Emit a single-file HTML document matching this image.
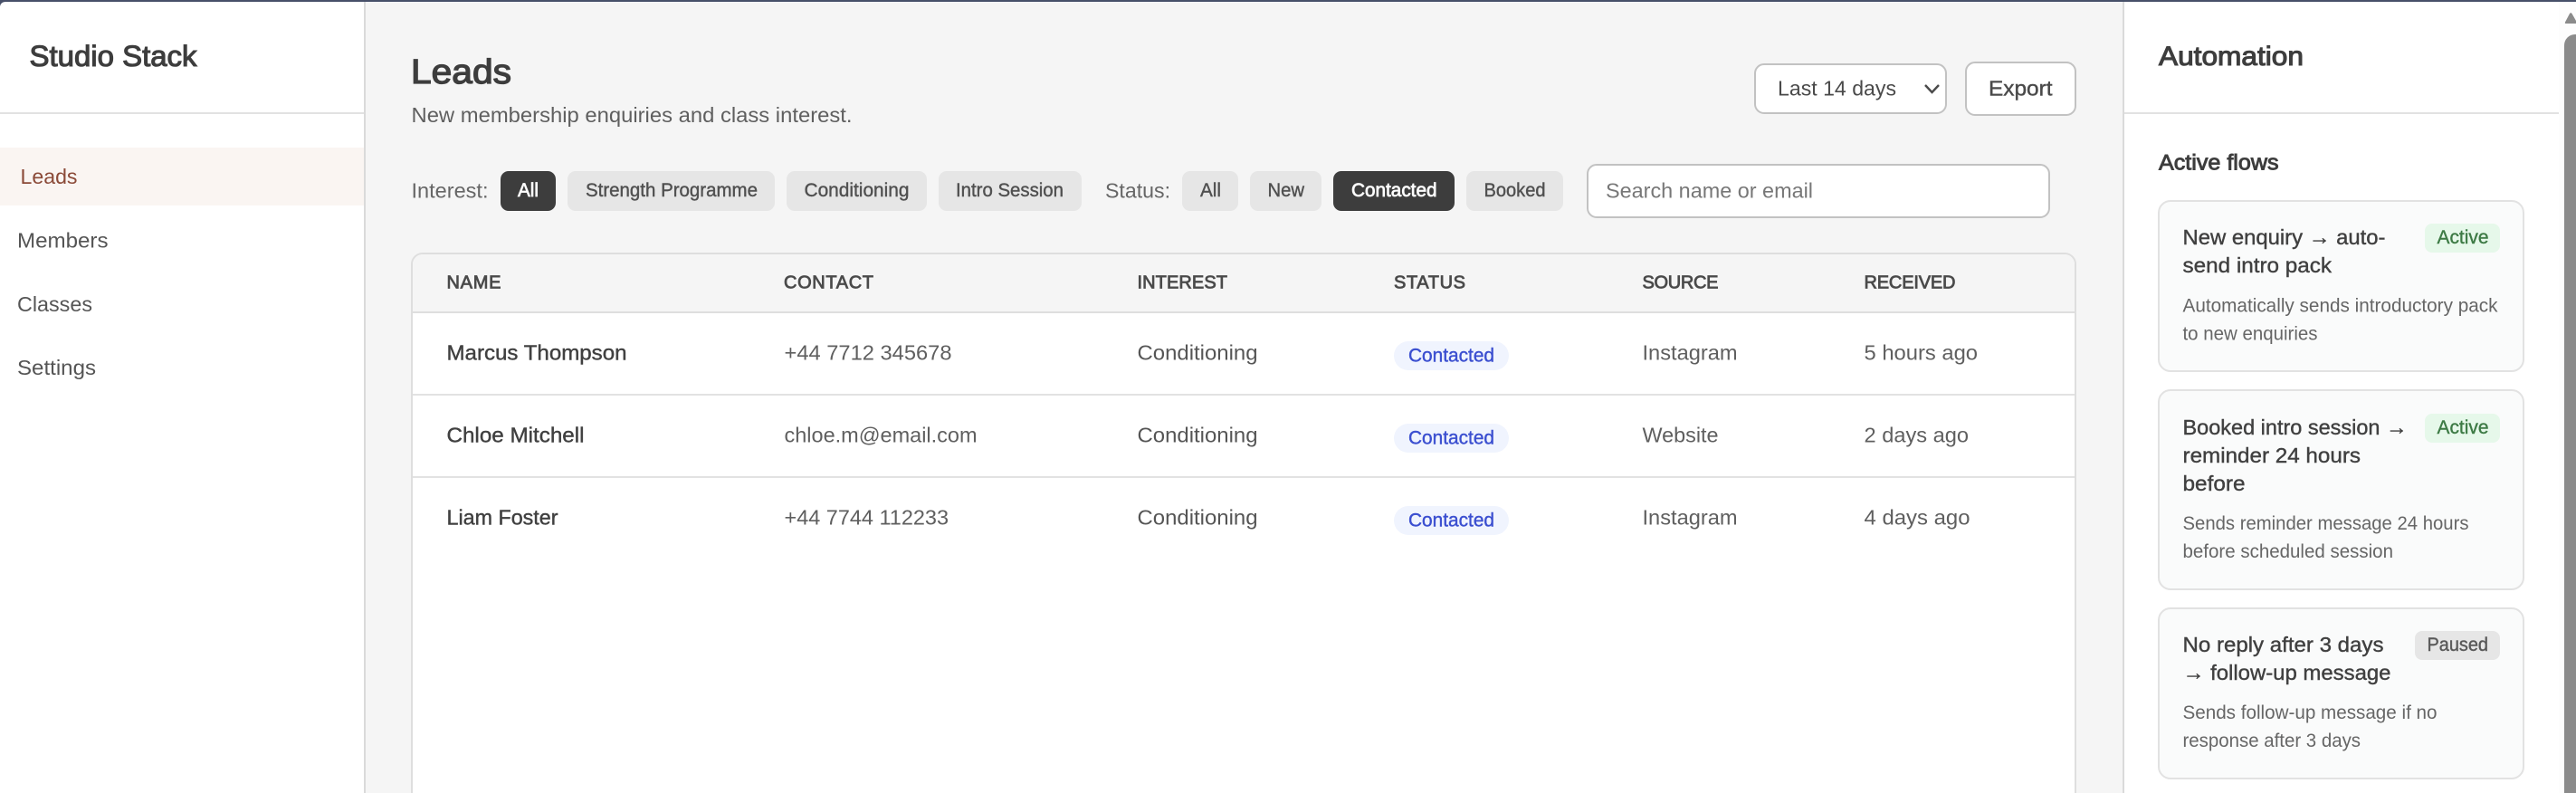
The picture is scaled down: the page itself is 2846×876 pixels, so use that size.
<!DOCTYPE html>
<html lang="en">
<head>
<meta charset="utf-8">
<title>Studio Stack - Leads</title>
<style>
html,body{margin:0;padding:0;width:2846px;height:876px;overflow:hidden;background:#fff}
body{position:relative;font-family:"Liberation Sans",sans-serif}
.b{position:absolute;box-sizing:border-box}
.chip{height:44px;top:189px;border-radius:9px;background:#e6e6e6}
.dark{background:#3d3d3d}
.card{left:2384px;width:405px;background:#fafbfb;border:2px solid #e2e2e2;border-radius:14px}
.ctl{background:#fff;border:2px solid #c2c2c2;border-radius:11px}
.pill{left:1540px;width:127px;height:32px;background:#f0f4fe;border-radius:16px}
.act{left:2679px;width:83px;height:32px;background:#e6f8ea;border-radius:8px}
svg.t{position:absolute;left:0;top:0}
text{font-family:"Liberation Sans",sans-serif;white-space:pre}
.semi{stroke-width:1.1px}
.hd{stroke-width:.8px;stroke:#4a4a4a}
.med{stroke-width:.4px}
</style>
</head>
<body>
<!-- main background -->
<div class="b" style="left:404px;top:0;width:1941px;height:876px;background:#f5f5f5"></div>
<!-- sidebar -->
<div class="b" style="left:402px;top:0;width:2px;height:876px;background:#dadada"></div>
<div class="b" style="left:0;top:124px;width:402px;height:2px;background:#e2e2e2"></div>
<div class="b" style="left:0;top:163px;width:402px;height:64px;background:#faf5f2"></div>
<!-- right panel -->
<div class="b" style="left:2345px;top:0;width:2px;height:876px;background:#dadada"></div>
<div class="b" style="left:2347px;top:124px;width:480px;height:2px;background:#e2e2e2"></div>
<div class="b" style="left:2827px;top:0;width:19px;height:876px;background:#fdfdfd"></div>
<!-- header controls -->
<div class="b ctl" style="left:1938px;top:70px;width:213px;height:56px"></div>
<div class="b ctl" style="left:2171px;top:68px;width:123px;height:60px"></div>
<!-- chips -->
<div class="b chip dark" style="left:553px;width:61px"></div>
<div class="b chip" style="left:627px;width:229px"></div>
<div class="b chip" style="left:869px;width:155px"></div>
<div class="b chip" style="left:1037px;width:158px"></div>
<div class="b chip" style="left:1306px;width:62px"></div>
<div class="b chip" style="left:1381px;width:79px"></div>
<div class="b chip dark" style="left:1473px;width:134px"></div>
<div class="b chip" style="left:1620px;width:107px"></div>
<div class="b ctl" style="left:1753px;top:181px;width:512px;height:60px"></div>
<!-- table -->
<div class="b" style="left:454px;top:279px;width:1840px;height:640px;background:#fff;border:2px solid #dedede;border-radius:13px;overflow:hidden">
  <div style="height:63px;background:#f5f5f5;border-bottom:2px solid #dedede"></div>
  <div style="height:89px;border-bottom:2px solid #e2e2e2"></div>
  <div style="height:89px;border-bottom:2px solid #e2e2e2"></div>
</div>
<div class="b pill" style="top:377px"></div>
<div class="b pill" style="top:468px"></div>
<div class="b pill" style="top:559px"></div>
<!-- automation cards -->
<div class="b card" style="top:221px;height:190px"></div>
<div class="b card" style="top:430px;height:222px"></div>
<div class="b card" style="top:671px;height:190px"></div>
<div class="b act" style="top:247px"></div>
<div class="b act" style="top:457px"></div>
<div class="b act" style="top:697px;left:2668px;width:94px;background:#e6e6e6"></div>
<!-- scrollbar -->
<div class="b" style="left:2833px;top:38px;width:13px;height:838px;background:#8b8b8b;border-radius:12px 0 0 0"></div>
<svg class="b" style="left:2833px;top:13px" width="13" height="14" viewBox="0 0 13 14"><path d="M1.500 13 Q.500 13 1 11.500 L6 2 Q7.200 .2 8.500 2 L13 10 V13Z" fill="#8b8b8b"/></svg>
<!-- top window edge -->
<svg class="b" style="left:0;top:0" width="12" height="10" viewBox="0 0 12 10"><path d="M0 0H12V2H6Q1 2 0 7Z" fill="#475069"/></svg>
<div class="b" style="left:0;top:0;width:2846px;height:2px;background:#475069"></div>

<!-- all text -->
<svg class="t" width="2846" height="876" viewBox="0 0 2846 876" xmlns="http://www.w3.org/2000/svg">
<text x="32.500" y="73" font-size="32" fill="#3d3d3d" stroke="#3d3d3d" class="semi" textLength="185" lengthAdjust="spacingAndGlyphs">Studio Stack</text>
<text x="22.500" y="203" font-size="23.500" fill="#8b4a38" textLength="63" lengthAdjust="spacingAndGlyphs">Leads</text>
<text x="19" y="273.500" font-size="23.500" fill="#555" textLength="100.500" lengthAdjust="spacingAndGlyphs">Members</text>
<text x="19" y="344" font-size="23.500" fill="#555" textLength="83" lengthAdjust="spacingAndGlyphs">Classes</text>
<text x="19" y="414" font-size="23.500" fill="#555" textLength="87" lengthAdjust="spacingAndGlyphs">Settings</text>

<text x="454" y="92" font-size="38" fill="#3d3d3d" stroke="#3d3d3d" style="stroke-width:1.300px" textLength="111" lengthAdjust="spacingAndGlyphs">Leads</text>
<text x="454.500" y="135" font-size="23" fill="#5f5f5f" textLength="487" lengthAdjust="spacingAndGlyphs">New membership enquiries and class interest.</text>

<text x="1964" y="105.500" font-size="23.500" fill="#4a4a4a" textLength="131" lengthAdjust="spacingAndGlyphs">Last 14 days</text>
<text x="2197" y="105.500" font-size="23.500" fill="#4a4a4a" stroke="#4a4a4a" class="med" textLength="70.500" lengthAdjust="spacingAndGlyphs">Export</text>

<text x="454.500" y="218.500" font-size="23.500" fill="#666" textLength="85" lengthAdjust="spacingAndGlyphs">Interest:</text>
<text x="572" y="217" font-size="21" fill="#fff" stroke="#fff" style="stroke-width:.7px" textLength="23" lengthAdjust="spacingAndGlyphs">All</text>
<text x="647" y="217" font-size="21" fill="#505050" stroke="#505050" class="med" textLength="190" lengthAdjust="spacingAndGlyphs">Strength Programme</text>
<text x="888.500" y="217" font-size="21" fill="#505050" stroke="#505050" class="med" textLength="116" lengthAdjust="spacingAndGlyphs">Conditioning</text>
<text x="1056" y="217" font-size="21" fill="#505050" stroke="#505050" class="med" textLength="119" lengthAdjust="spacingAndGlyphs">Intro Session</text>
<text x="1221" y="218.500" font-size="23.500" fill="#666" textLength="72" lengthAdjust="spacingAndGlyphs">Status:</text>
<text x="1326" y="217" font-size="21" fill="#505050" stroke="#505050" class="med" textLength="23" lengthAdjust="spacingAndGlyphs">All</text>
<text x="1400.500" y="217" font-size="21" fill="#505050" stroke="#505050" class="med" textLength="40.500" lengthAdjust="spacingAndGlyphs">New</text>
<text x="1493" y="217" font-size="21" fill="#fff" stroke="#fff" style="stroke-width:.7px" textLength="94.500" lengthAdjust="spacingAndGlyphs">Contacted</text>
<text x="1639.500" y="217" font-size="21" fill="#505050" stroke="#505050" class="med" textLength="68" lengthAdjust="spacingAndGlyphs">Booked</text>
<text x="1774" y="218.500" font-size="23.500" fill="#777" textLength="229" lengthAdjust="spacingAndGlyphs">Search name or email</text>

<text x="493.500" y="318.500" font-size="20" class="hd" fill="#4a4a4a" textLength="60" lengthAdjust="spacing">NAME</text>
<text x="866" y="318.500" font-size="20" class="hd" fill="#4a4a4a" textLength="99" lengthAdjust="spacing">CONTACT</text>
<text x="1256.500" y="318.500" font-size="20" class="hd" fill="#4a4a4a" textLength="99.500" lengthAdjust="spacing">INTEREST</text>
<text x="1540" y="318.500" font-size="20" class="hd" fill="#4a4a4a" textLength="79" lengthAdjust="spacing">STATUS</text>
<text x="1814.500" y="318.500" font-size="20" class="hd" fill="#4a4a4a" textLength="84" lengthAdjust="spacing">SOURCE</text>
<text x="2059.500" y="318.500" font-size="20" class="hd" fill="#4a4a4a" textLength="101" lengthAdjust="spacing">RECEIVED</text>

<text x="493.500" y="397.500" font-size="23" fill="#404040" stroke="#404040" class="med" textLength="199" lengthAdjust="spacingAndGlyphs">Marcus Thompson</text>
<text x="866.500" y="397.500" font-size="23" fill="#5f5f5f" textLength="185" lengthAdjust="spacingAndGlyphs">+44 7712 345678</text>
<text x="1256.500" y="397.500" font-size="23" fill="#555" textLength="133" lengthAdjust="spacingAndGlyphs">Conditioning</text>
<text x="1556" y="399.500" font-size="21" fill="#3b4fd0" stroke="#3b4fd0" class="med" textLength="95" lengthAdjust="spacingAndGlyphs">Contacted</text>
<text x="1814.500" y="397.500" font-size="23" fill="#5f5f5f" textLength="105" lengthAdjust="spacingAndGlyphs">Instagram</text>
<text x="2059.500" y="397.500" font-size="23" fill="#5f5f5f" textLength="125.500" lengthAdjust="spacingAndGlyphs">5 hours ago</text>

<text x="493.500" y="488.500" font-size="23" fill="#404040" stroke="#404040" class="med" textLength="152" lengthAdjust="spacingAndGlyphs">Chloe Mitchell</text>
<text x="866.500" y="488.500" font-size="23" fill="#5f5f5f" textLength="213" lengthAdjust="spacingAndGlyphs">chloe.m@email.com</text>
<text x="1256.500" y="488.500" font-size="23" fill="#555" textLength="133" lengthAdjust="spacingAndGlyphs">Conditioning</text>
<text x="1556" y="490.500" font-size="21" fill="#3b4fd0" stroke="#3b4fd0" class="med" textLength="95" lengthAdjust="spacingAndGlyphs">Contacted</text>
<text x="1814.500" y="488.500" font-size="23" fill="#5f5f5f" textLength="84" lengthAdjust="spacingAndGlyphs">Website</text>
<text x="2059.500" y="488.500" font-size="23" fill="#5f5f5f" textLength="115.500" lengthAdjust="spacingAndGlyphs">2 days ago</text>

<text x="493.500" y="579.500" font-size="23" fill="#404040" stroke="#404040" class="med" textLength="123" lengthAdjust="spacingAndGlyphs">Liam Foster</text>
<text x="866.500" y="579.500" font-size="23" fill="#5f5f5f" textLength="181.500" lengthAdjust="spacingAndGlyphs">+44 7744 112233</text>
<text x="1256.500" y="579.500" font-size="23" fill="#555" textLength="133" lengthAdjust="spacingAndGlyphs">Conditioning</text>
<text x="1556" y="581.500" font-size="21" fill="#3b4fd0" stroke="#3b4fd0" class="med" textLength="95" lengthAdjust="spacingAndGlyphs">Contacted</text>
<text x="1814.500" y="579.500" font-size="23" fill="#5f5f5f" textLength="105" lengthAdjust="spacingAndGlyphs">Instagram</text>
<text x="2059.500" y="579.500" font-size="23" fill="#5f5f5f" textLength="117" lengthAdjust="spacingAndGlyphs">4 days ago</text>

<text x="2385" y="72" font-size="30" fill="#3d3d3d" stroke="#3d3d3d" class="semi" textLength="160" lengthAdjust="spacingAndGlyphs">Automation</text>
<text x="2385" y="187.500" font-size="24" fill="#3d3d3d" stroke="#3d3d3d" style="stroke-width:.9px" textLength="132.500" lengthAdjust="spacingAndGlyphs">Active flows</text>

<text x="2411.500" y="270" font-size="23.500" fill="#404040" stroke="#404040" class="med" textLength="224" lengthAdjust="spacingAndGlyphs">New enquiry → auto-</text>
<text x="2411.500" y="301" font-size="23.500" fill="#404040" stroke="#404040" class="med" textLength="164.500" lengthAdjust="spacingAndGlyphs">send intro pack</text>
<text x="2411.500" y="344.500" font-size="21" fill="#666" textLength="348" lengthAdjust="spacingAndGlyphs">Automatically sends introductory pack</text>
<text x="2411.500" y="375.500" font-size="21" fill="#666" textLength="149" lengthAdjust="spacingAndGlyphs">to new enquiries</text>
<text x="2692.500" y="269" font-size="21.500" fill="#3d7a45" stroke="#3d7a45" class="med" textLength="57" lengthAdjust="spacingAndGlyphs">Active</text>

<text x="2411.500" y="480" font-size="23.500" fill="#404040" stroke="#404040" class="med" textLength="248" lengthAdjust="spacingAndGlyphs">Booked intro session →</text>
<text x="2411.500" y="511" font-size="23.500" fill="#404040" stroke="#404040" class="med" textLength="196.500" lengthAdjust="spacingAndGlyphs">reminder 24 hours</text>
<text x="2411.500" y="542" font-size="23.500" fill="#404040" stroke="#404040" class="med" textLength="69" lengthAdjust="spacingAndGlyphs">before</text>
<text x="2411.500" y="585" font-size="21" fill="#666" textLength="316" lengthAdjust="spacingAndGlyphs">Sends reminder message 24 hours</text>
<text x="2411.500" y="616" font-size="21" fill="#666" textLength="232.500" lengthAdjust="spacingAndGlyphs">before scheduled session</text>
<text x="2692.500" y="479" font-size="21.500" fill="#3d7a45" stroke="#3d7a45" class="med" textLength="57" lengthAdjust="spacingAndGlyphs">Active</text>

<text x="2411.500" y="720" font-size="23.500" fill="#404040" stroke="#404040" class="med" textLength="222" lengthAdjust="spacingAndGlyphs">No reply after 3 days</text>
<text x="2411.500" y="751" font-size="23.500" fill="#404040" stroke="#404040" class="med" textLength="230" lengthAdjust="spacingAndGlyphs">→ follow-up message</text>
<text x="2411.500" y="794" font-size="21" fill="#666" textLength="281" lengthAdjust="spacingAndGlyphs">Sends follow-up message if no</text>
<text x="2411.500" y="825" font-size="21" fill="#666" textLength="196.500" lengthAdjust="spacingAndGlyphs">response after 3 days</text>
<text x="2681.500" y="719" font-size="21.500" fill="#595959" stroke="#595959" class="med" textLength="67.500" lengthAdjust="spacingAndGlyphs">Paused</text>
<!-- select chevron -->
<path d="M2127 94 L2134.500 102 L2142 94" fill="none" stroke="#4a4a4a" stroke-width="2.400"/>
</svg>
</body>
</html>
